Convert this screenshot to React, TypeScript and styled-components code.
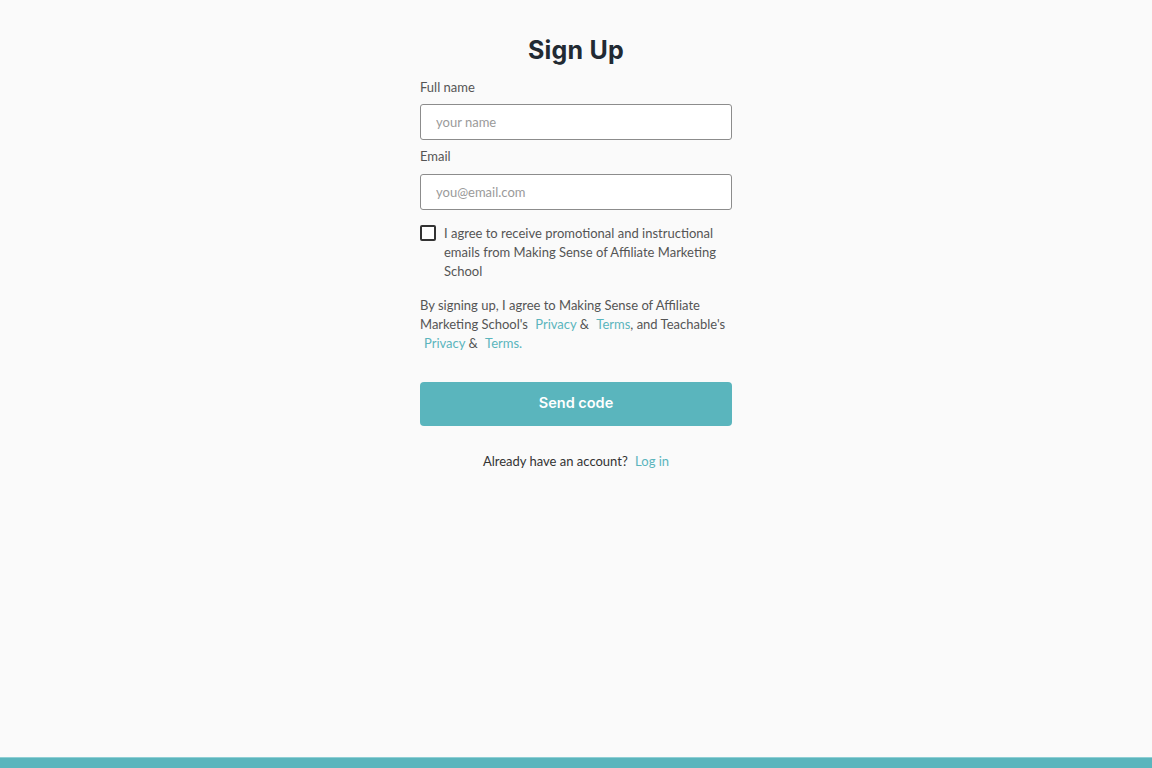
import React from "react";
import styled, { createGlobalStyle } from "styled-components";

const Global = createGlobalStyle`
  html, body { margin: 0; padding: 0; background: #fafafa; }
  body { font-family: "Lato", "Open Sans", sans-serif; color: #4a4a4a; }
  * { box-sizing: border-box; }
`;

const Page = styled.div`
  min-height: 768px;
  display: flex;
  flex-direction: column;
  background: #fafafa;
`;

const Main = styled.main`
  flex: 1;
  display: flex;
  justify-content: center;
  padding-top: 34px;
`;

const Form = styled.form`
  width: 312px;
  display: flex;
  flex-direction: column;
`;

const Title = styled.h1`
  margin: 0 0 13px;
  text-align: center;
  font-family: "Inter", sans-serif;
  font-weight: 700;
  font-size: 25px;
  line-height: 32px;
  color: #222a33;
  letter-spacing: 0.2px;
`;

const Label = styled.label<{ $gap?: number }>`
  font-size: 13px;
  line-height: 16px;
  color: #555;
  margin-bottom: ${(p) => p.$gap ?? 9}px;
`;

const Input = styled.input`
  height: 36px;
  width: 100%;
  border: 1px solid #8c8c8c;
  border-radius: 3px;
  background: #fff;
  padding: 0 15px;
  font-family: "Lato", sans-serif;
  font-size: 13px;
  color: #333;
  margin-bottom: 8px;
  &::placeholder { color: #9a9a9a; }
`;

const CheckRow = styled.label`
  display: flex;
  gap: 8px;
  align-items: flex-start;
  margin-top: 7px;
`;

const Box = styled.span`
  flex: none;
  width: 16px;
  height: 16px;
  border: 2px solid #333;
  border-radius: 2px;
  background: #fff;
`;

const CheckText = styled.span`
  font-size: 13px;
  line-height: 19px;
  color: #555;
  margin-top: -1px;
`;

const Terms = styled.p`
  margin: 15px -12px 0 0;
  font-size: 13px;
  line-height: 19px;
  color: #555;
`;

const Link = styled.a`
  color: #5bb5bd;
  text-decoration: none;
  padding-left: 4px;
`;

const Button = styled.button`
  margin-top: 29px;
  height: 44px;
  border: none;
  border-radius: 4px;
  background: #5ab5bd;
  color: #fff;
  font-family: "Inter", sans-serif;
  font-weight: 600;
  font-size: 14.5px;
  padding-bottom: 4px;
`;

const Already = styled.p`
  margin: 26px 0 0;
  text-align: center;
  font-size: 13px;
  line-height: 19px;
  color: #333;
`;

const Footer = styled.footer`
  height: 11px;
  background: #5bb5bd;
  border-top: 1px solid #8fcfd4;
`;

export default function App() {
  return (
    <Page>
      <Global />
      <Main>
        <Form onSubmit={(e) => e.preventDefault()}>
          <Title>Sign Up</Title>
          <Label>Full name</Label>
          <Input placeholder="your name" />
          <Label $gap={10}>Email</Label>
          <Input placeholder="you@email.com" />
          <CheckRow>
            <Box />
            <CheckText>
              I agree to receive promotional and instructional emails from Making Sense of Affiliate Marketing School
            </CheckText>
          </CheckRow>
          <Terms>
            By signing up, I agree to Making Sense of Affiliate Marketing School's{" "}
            <Link href="#">Privacy</Link> &amp; <Link href="#">Terms</Link>, and Teachable's{" "}
            <Link href="#">Privacy</Link> &amp; <Link href="#">Terms.</Link>
          </Terms>
          <Button type="submit">Send code</Button>
          <Already>
            Already have an account? <Link href="#">Log in</Link>
          </Already>
        </Form>
      </Main>
      <Footer />
    </Page>
  );
}
